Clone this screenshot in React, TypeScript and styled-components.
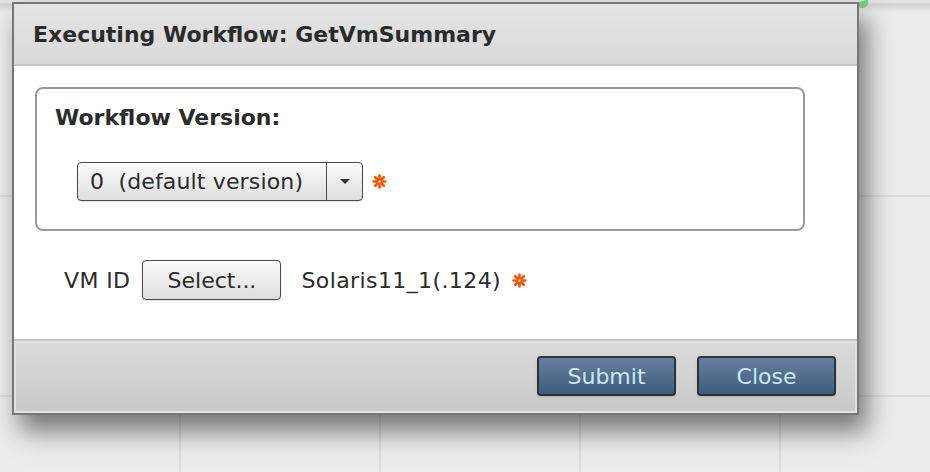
import styled, { createGlobalStyle } from "styled-components";

const GlobalStyle = createGlobalStyle`
  html, body {
    margin: 0;
    padding: 0;
    background: #ececec;
  }
  body {
    font-family: "DejaVu Sans", Verdana, sans-serif;
    color: #2b2b2b;
  }
`;

const Page = styled.div`
  width: 930px;
  height: 472px;
  overflow: hidden;
  position: relative;
  background-color: #ececec;
  background-image:
    linear-gradient(to right, #dcdcdc 2px, transparent 2px),
    linear-gradient(to bottom, #dcdcdc 2px, transparent 2px);
  background-size: 200px 200px;
  background-position: 179px 195px;
  padding: 2px 0 0 12px;
  box-sizing: border-box;
`;

const TopBar = styled.div`
  position: absolute;
  top: 0;
  left: 0;
  right: 0;
  height: 12px;
  background: linear-gradient(to bottom, #e2e2e2 0, #e2e2e2 3px, #cfcfcf 4px, #ececec 12px);
`;

const GreenMark = styled.div`
  position: absolute;
  top: 1px;
  left: 857px;
  width: 12px;
  height: 7px;
  border-radius: 0 0 8px 8px;
  background: #7ccf7c;
  transform: rotate(-15deg);
`;

const Dialog = styled.div`
  position: relative;
  width: 847px;
  border: 2px solid #777;
  box-sizing: border-box;
  background: #fff;
  box-shadow: 8px 16px 24px rgba(0, 0, 0, 0.5);
  display: flex;
  flex-direction: column;
`;

const Header = styled.div`
  height: 60px;
  display: flex;
  align-items: center;
  padding-left: 19px;
  background: linear-gradient(to bottom, #e4e4e4, #d9d9d9);
  border-bottom: 2px solid #c6c6c6;
`;

const Title = styled.h2`
  margin: 0;
  font-size: 22px;
  font-weight: bold;
  color: #2b2b2b;
`;

const Body = styled.div`
  height: 273px;
  padding: 21px 0 0 21px;
  box-sizing: border-box;
`;

const VersionBox = styled.div`
  width: 770px;
  height: 144px;
  box-sizing: border-box;
  border: 2px solid #999;
  border-radius: 8px;
  padding: 16px 0 0 18px;
`;

const BoxLabel = styled.div`
  font-size: 22px;
  line-height: 26px;
  font-weight: bold;
  color: #2b2b2b;
`;

const SelectRow = styled.div`
  display: flex;
  align-items: center;
  margin: 31px 0 0 22px;
`;

const Dropdown = styled.div`
  width: 286px;
  height: 39px;
  box-sizing: border-box;
  border: 1.5px solid #4a4a4a;
  border-radius: 4px;
  background: linear-gradient(to bottom, #fbfbfb, #dedede);
  box-shadow: 0 1px 2px rgba(0, 0, 0, 0.12);
  display: flex;
  align-items: stretch;
`;

const DropdownValue = styled.div`
  flex: 1;
  display: flex;
  align-items: center;
  padding-left: 12px;
  font-size: 22px;
  letter-spacing: 0.15px;
  color: #2b2b2b;
  white-space: pre;
`;

const DropdownArrow = styled.div`
  width: 35px;
  border-left: 1.5px solid #4a4a4a;
  display: flex;
  align-items: center;
  justify-content: center;
`;

const Required = styled.span<{ gap?: number }>`
  display: inline-flex;
  margin-left: ${({ gap }) => gap ?? 8}px;
`;

const FieldRow = styled.div`
  display: flex;
  align-items: center;
  margin: 29px 0 0 29px;
  font-size: 22px;
  letter-spacing: 0.4px;
  color: #2b2b2b;
`;

const FieldLabel = styled.span`
  margin-right: 12px;
`;

const Button = styled.button<{ primary?: boolean }>`
  font-family: "DejaVu Sans", Verdana, sans-serif;
  width: 139px;
  height: 40px;
  box-sizing: border-box;
  border-radius: 4px;
  font-size: 22px;
  cursor: pointer;
  padding: 0;
  border: ${({ primary }) => (primary ? "2px solid #2f3338" : "1.5px solid #4a4a4a")};
  color: ${({ primary }) => (primary ? "#cbe7f9" : "#2b2b2b")};
  background: ${({ primary }) =>
    primary
      ? "linear-gradient(to bottom, #67819f, #3e5b7c)"
      : "linear-gradient(to bottom, #fbfbfb, #dedede)"};
  box-shadow: 0 1px 2px rgba(0, 0, 0, 0.15);
`;

const Value = styled.span`
  margin-left: 20px;
`;

const Footer = styled.div`
  height: 74px;
  box-sizing: border-box;
  border-top: 2px solid #c8c8c8;
  background: linear-gradient(to bottom, #dadada, #c9c9c9);
  box-shadow: inset 0 0 0 2px #e2e2e2;
  display: flex;
  align-items: center;
  justify-content: flex-end;
  gap: 21px;
  padding: 0 21px 2px 0;
`;

const Asterisk = () => (
  <svg width="15" height="15" viewBox="0 0 14 14">
    <g stroke="#ff5500" strokeWidth="2.5" strokeLinecap="round">
      <line x1="7" y1="1.5" x2="7" y2="12.5" />
      <line x1="1.5" y1="7" x2="12.5" y2="7" />
      <line x1="3" y1="3" x2="11" y2="11" />
      <line x1="11" y1="3" x2="3" y2="11" />
    </g>
    <circle cx="7" cy="7" r="1.2" fill="#fff" />
  </svg>
);

const Caret = () => (
  <svg width="12" height="7" viewBox="0 0 12 7">
    <path d="M1 1 L11 1 L6 6 Z" fill="#333" />
  </svg>
);

export default function App() {
  return (
    <Page>
      <GlobalStyle />
      <TopBar />
      <GreenMark />
      <Dialog>
        <Header>
          <Title>Executing Workflow: GetVmSummary</Title>
        </Header>
        <Body>
          <VersionBox>
            <BoxLabel>Workflow Version:</BoxLabel>
            <SelectRow>
              <Dropdown>
                <DropdownValue>0  (default version)</DropdownValue>
                <DropdownArrow>
                  <Caret />
                </DropdownArrow>
              </Dropdown>
              <Required gap={9}>
                <Asterisk />
              </Required>
            </SelectRow>
          </VersionBox>
          <FieldRow>
            <FieldLabel>VM ID</FieldLabel>
            <Button>Select...</Button>
            <Value>Solaris11_1(.124)</Value>
            <Required gap={11}>
              <Asterisk />
            </Required>
          </FieldRow>
        </Body>
        <Footer>
          <Button primary>Submit</Button>
          <Button primary>Close</Button>
        </Footer>
      </Dialog>
    </Page>
  );
}
